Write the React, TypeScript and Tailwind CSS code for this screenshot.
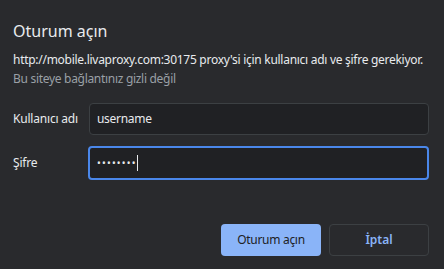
export default function App() {
  return (
    <div
      className="w-[444px] h-[269px] bg-[#292a2d] text-[#e8eaed] flex flex-col px-[13px] pt-[21px] pb-[13px]"
      style={{ fontFamily: '"Noto Sans", "Open Sans", sans-serif' }}
    >
      <h1 className="text-[16px] leading-[21px] text-[#e8eaed]">Oturum açın</h1>
      <p className="mt-[9px] text-[12px] leading-[18px] tracking-[-0.28px] text-[#e8eaed]">
        http://mobile.livaproxy.com:30175 proxy'si için kullanıcı adı ve şifre gerekiyor.
      </p>
      <p className="mt-[1px] text-[12px] leading-[18px] tracking-[-0.3px] text-[#9aa0a6]">
        Bu siteye bağlantınız gizli değil
      </p>

      <div className="mt-[15px] flex flex-col gap-[11px] pr-[2px]">
        <div className="flex items-center">
          <label className="w-[76px] text-[12px] tracking-[-0.2px]">Kullanıcı adı</label>
          <div className="flex-1 h-[32px] rounded-[4px] border border-[#3c4043] bg-[#202124] flex items-center px-[7px] text-[12px] tracking-[-0.3px]">
            username
          </div>
        </div>
        <div className="flex items-center">
          <label className="w-[75px] text-[12px] tracking-[-0.2px]">Şifre</label>
          <div className="flex-1 h-[34px] rounded-[4px] border-2 border-[#4a87ea] bg-[#202124] flex items-center px-[7px]">
            <span className="text-[10px] tracking-[1.2px] leading-none">••••••••</span>
            <span className="w-px h-[16px] bg-[#e8eaed]" />
          </div>
        </div>
      </div>

      <div className="mt-auto flex justify-end gap-[8px] pr-[2px]">
        <button className="w-[100px] h-[32px] rounded-[4px] bg-[#8ab4f8] text-[#202124] text-[12px] tracking-[-0.3px]">
          Oturum açın
        </button>
        <button className="w-[100px] h-[32px] rounded-[4px] border border-[#3c4043] text-[#8ab4f8] text-[12px] font-semibold">
          İptal
        </button>
      </div>
    </div>
  );
}
